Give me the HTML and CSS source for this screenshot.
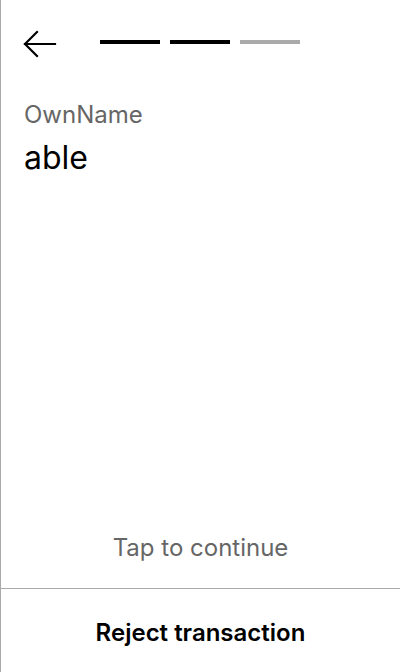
FILE: index.html
```html
<!DOCTYPE html>
<html>
<head>
<meta charset="utf-8">
<link rel="stylesheet" href="styles.css">
</head>
<body>
<div class="screen">
  <header class="header">
    <button class="back" aria-label="Back">
      <svg width="34" height="28" viewBox="0 0 34 28" fill="none" stroke="#000" stroke-width="2.2" stroke-linecap="square">
        <path d="M2 14H32"/>
        <path d="M14 2L2 14L14 26"/>
      </svg>
    </button>
    <div class="steps">
      <span class="step done"></span>
      <span class="step done"></span>
      <span class="step"></span>
    </div>
  </header>
  <main class="content">
    <div class="label">OwnName</div>
    <div class="value">able</div>
  </main>
  <div class="tap">Tap to continue</div>
  <footer class="footer">
    <button class="reject">Reject transaction</button>
  </footer>
</div>
</body>
</html>
```
FILE: styles.css
```css
* { box-sizing: border-box; }
html, body { margin: 0; padding: 0; background: #fff; }
body { font-family: Inter, "Noto Sans", sans-serif; color: #000; }
.screen {
  width: 400px;
  height: 672px;
  border-left: 1px solid #aaa;
  display: flex;
  flex-direction: column;
}
.header {
  display: flex;
  align-items: center;
  padding: 29px 0 0 22px;
  height: 58px;
}
.back {
  border: 0;
  background: none;
  padding: 0;
  width: 34px;
  height: 28px;
  display: block;
}
.back svg { display: block; }
.steps {
  display: flex;
  gap: 10px;
  margin-left: 43px;
  align-self: flex-start;
  margin-top: 11px;
}
.step {
  width: 60px;
  height: 4px;
  background: #aaa;
}
.step.done { background: #000; }
.content {
  padding: 42px 23px 0;
  flex: 1;
}
.label {
  font-size: 24px;
  line-height: 29px;
  color: #666;
}
.value {
  font-size: 32px;
  line-height: 39px;
  margin-top: 9px;
}
.tap {
  text-align: center;
  font-size: 24px;
  line-height: 29px;
  color: #666;
  padding-bottom: 26px;
}
.footer {
  border-top: 1px solid #aaa;
  height: 84px;
  display: flex;
  align-items: center;
  justify-content: center;
  padding-top: 3px;
}
.reject {
  border: 0;
  background: none;
  font-family: Inter, "Noto Sans", sans-serif;
  font-size: 24px;
  font-weight: 600;
  color: #000;
  padding: 0;
}
```
